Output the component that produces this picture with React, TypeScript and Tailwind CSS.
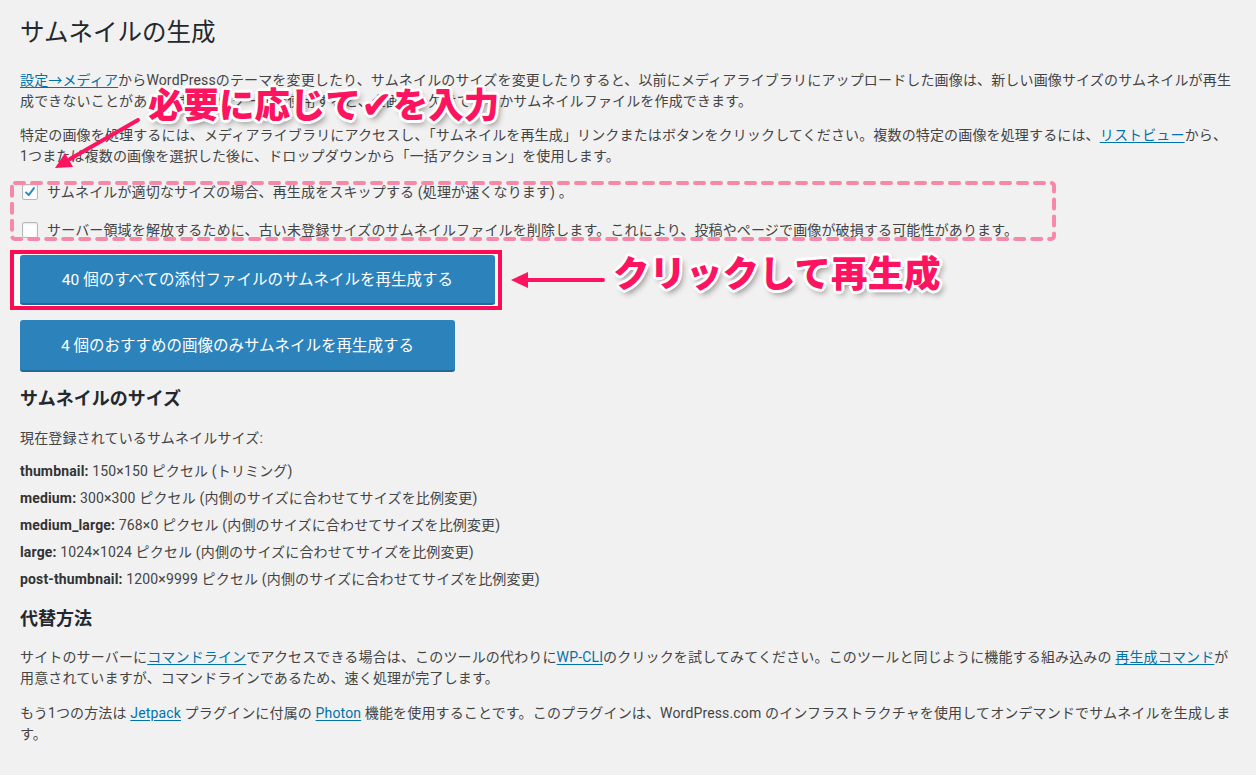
import React from "react";

const outline =
  "[text-shadow:3px_0_0_#fff,-3px_0_0_#fff,0_3px_0_#fff,0_-3px_0_#fff,2px_2px_0_#fff,-2px_2px_0_#fff,2px_-2px_0_#fff,-2px_-2px_0_#fff,3px_4px_6px_rgba(0,0,0,0.45)]";

function Link({ children }: { children: React.ReactNode }) {
  return <a className="text-[#0073aa] underline underline-offset-2">{children}</a>;
}

function Checkbox({ checked }: { checked?: boolean }) {
  return (
    <span className="mr-[9px] ml-[2px] flex h-[16px] w-[16px] items-center justify-center rounded-[2px] border border-[#b4b9be] bg-white shadow-[inset_0_1px_2px_rgba(0,0,0,0.1)]">
      {checked && (
        <svg viewBox="0 0 16 16" className="h-[14px] w-[14px]">
          <path d="M3.5 8.5 L6.5 11.5 L12.5 3.5" fill="none" stroke="#1e8cbe" strokeWidth="2.2" strokeLinecap="round" strokeLinejoin="round" />
        </svg>
      )}
    </span>
  );
}

export default function App() {
  const sizes = [
    ["thumbnail:", "150×150 ピクセル (トリミング)"],
    ["medium:", "300×300 ピクセル (内側のサイズに合わせてサイズを比例変更)"],
    ["medium_large:", "768×0 ピクセル (内側のサイズに合わせてサイズを比例変更)"],
    ["large:", "1024×1024 ピクセル (内側のサイズに合わせてサイズを比例変更)"],
    ["post-thumbnail:", "1200×9999 ピクセル (内側のサイズに合わせてサイズを比例変更)"],
  ];

  return (
    <div className="relative min-h-screen overflow-hidden bg-[#f1f1f1] px-[20px] font-['Roboto','Noto_Sans_CJK_JP',sans-serif] text-[14px] text-[#444]">
      {/* Header */}
      <h1 className="pt-[17px] text-[24.5px] leading-[32px] text-[#23282d]">サムネイルの生成</h1>

      <p className="mt-[21px] whitespace-nowrap leading-[21px] tracking-[0.15px]">
        <Link>設定→メディア</Link>からWordPressのテーマを変更したり、サムネイルのサイズを変更したりすると、以前にメディアライブラリにアップロードした画像は、新しい画像サイズのサムネイルが再生
        <br />
        成できないことがあります。このツールを使用すると、全画像の欠けているかサムネイルファイルを作成できます。
      </p>

      <p className="mt-[13px] whitespace-nowrap leading-[21px] tracking-[0.15px]">
        特定の画像を処理するには、メディアライブラリにアクセスし、「サムネイルを再生成」リンクまたはボタンをクリックしてください。複数の特定の画像を処理するには、<Link>リストビュー</Link>から、
        <br />
        1つまたは複数の画像を選択した後に、ドロップダウンから「一括アクション」を使用します。
      </p>

      {/* Options */}
      <div className="relative mt-[13px] flex flex-col gap-[14px]">
        <label className="flex h-[24px] items-center whitespace-nowrap tracking-[0.15px]">
          <Checkbox checked />
          サムネイルが適切なサイズの場合、再生成をスキップする (処理が速くなります) 。
        </label>
        <label className="flex h-[24px] items-center whitespace-nowrap tracking-[0.15px]">
          <Checkbox />
          サーバー領域を解放するために、古い未登録サイズのサムネイルファイルを削除します。これにより、投稿やページで画像が破損する可能性があります。
        </label>
        <svg className="pointer-events-none absolute left-[-10px] top-[1px] h-[60px] w-[1046px]" viewBox="0 0 1046 60">
          <rect x="2" y="2" width="1042" height="56" rx="3" fill="none" stroke="#f788a8" strokeWidth="4" strokeDasharray="9 8" strokeLinecap="round" />
        </svg>
      </div>

      {/* Buttons */}
      <div className="mt-[8px] -ml-[10px] w-[492px] border-4 border-[#fe0b56] bg-[#fafafa] pb-[1px] pl-[6px] pr-[3px] pt-[1px]">
        <button className="flex h-[50px] w-full items-center justify-center rounded-[3px] border-b-2 border-[#1f6a9b] bg-[#2c83bb] pt-[3px] text-[15.5px] text-white">
          40 個のすべての添付ファイルのサムネイルを再生成する
        </button>
      </div>
      <button className="mt-[10px] flex h-[52px] w-[435px] items-center justify-center rounded-[3px] border-b-2 border-[#1f6a9b] bg-[#2c83bb] pt-[4px] text-[15.5px] text-white">
        4 個のおすすめの画像のみサムネイルを再生成する
      </button>

      {/* Sizes */}
      <h2 className="mt-[15px] text-[18px] font-bold leading-[24px] text-[#23282d]">サムネイルのサイズ</h2>
      <p className="mt-[17px] leading-[21px] tracking-[0.15px]">現在登録されているサムネイルサイズ:</p>
      <ul className="mt-[9px]">
        {sizes.map(([name, desc]) => (
          <li key={name} className="h-[27px] leading-[27px] tracking-[0.15px]">
            <strong className="font-bold text-[#333]">{name}</strong> {desc}
          </li>
        ))}
      </ul>

      {/* Alternatives */}
      <h2 className="mt-[14px] text-[18px] font-bold leading-[24px] text-[#23282d]">代替方法</h2>
      <p className="mt-[16px] whitespace-nowrap leading-[21px] tracking-[0.15px]">
        サイトのサーバーに<Link>コマンドライン</Link>でアクセスできる場合は、このツールの代わりに<Link>WP-CLI</Link>のクリックを試してみてください。このツールと同じように機能する組み込みの <Link>再生成コマンド</Link>が
        <br />
        用意されていますが、コマンドラインであるため、速く処理が完了します。
      </p>
      <p className="mt-[14px] whitespace-nowrap leading-[21px] tracking-[0.15px]">
        もう1つの方法は <Link>Jetpack</Link> プラグインに付属の <Link>Photon</Link> 機能を使用することです。このプラグインは、WordPress.com のインフラストラクチャを使用してオンデマンドでサムネイルを生成しま
        <br />
        す。
      </p>

      {/* Annotations */}
      <div className={`absolute left-[148px] top-[83px] whitespace-nowrap font-['Noto_Sans_CJK_JP',sans-serif] text-[35.5px] font-black leading-[40px] text-[#fd1360] ${outline}`}>
        必要に応じて<span className="font-['DejaVu_Sans',sans-serif] text-[38px]">✔︎</span>を入力
      </div>
      <svg className="pointer-events-none absolute left-0 top-0 h-[200px] w-[200px]" viewBox="0 0 200 200">
        <line x1="138" y1="120" x2="70" y2="159" stroke="#fd1360" strokeWidth="4" strokeLinecap="round" />
        <polygon points="55,168 73,167 65,153" fill="#fd1360" />
      </svg>

      <div className={`absolute left-[613px] top-[252px] whitespace-nowrap font-['Noto_Sans_CJK_JP',sans-serif] text-[36.5px] font-black leading-[40px] text-[#fd1360] ${outline}`}>
        クリックして再生成
      </div>
      <svg className="pointer-events-none absolute left-[505px] top-[268px] h-[24px] w-[105px]" viewBox="0 0 105 24">
        <line x1="20" y1="12" x2="98" y2="12" stroke="#fd1360" strokeWidth="4" strokeLinecap="round" />
        <polygon points="6,12 23,4 23,20" fill="#fd1360" />
      </svg>
    </div>
  );
}
